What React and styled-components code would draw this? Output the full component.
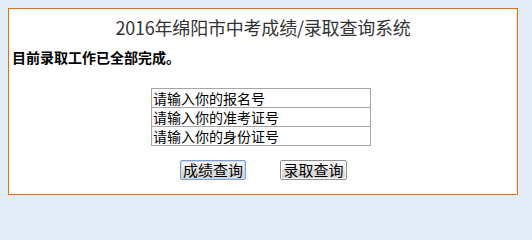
import React from "react";
import styled, { createGlobalStyle } from "styled-components";

const Global = createGlobalStyle`
  html, body { background: #e3edf7; }
  body {
    margin: 8px;
    font-family: "Noto Sans CJK SC", "Noto Sans", sans-serif;
  }
`;

const Panel = styled.div`
  width: 508px;
  height: 185px;
  border: 1px solid #ff6600;
  background: #fff;
  display: flex;
  flex-direction: column;
`;

const Title = styled.h1`
  margin: 6px 0 0;
  font-size: 18px;
  line-height: 24px;
  font-weight: normal;
  color: #333;
  text-align: center;
  letter-spacing: -0.2px;
`;

const Notice = styled.p`
  margin: 8px 0 0 3px;
  font-size: 14px;
  line-height: 20px;
  font-weight: bold;
  color: #000;
`;

const Fields = styled.div`
  margin: 21px 0 0 142px;
  display: flex;
  flex-direction: column;
  width: 220px;
`;

const Field = styled.input`
  box-sizing: border-box;
  width: 220px;
  height: 20px;
  margin: 0;
  padding: 0 1px;
  border: 1px solid #a5a5a5;
  font-family: "Noto Sans CJK SC", sans-serif;
  font-size: 14px;
  line-height: 18px;
  color: #000;
  background: #fff;
  outline: none;
  & + & { margin-top: -1px; }
`;

const Actions = styled.div`
  margin-top: 14px;
  display: flex;
  justify-content: center;
  gap: 34px;
  padding-left: 1px;
`;

const Button = styled.button`
  box-sizing: border-box;
  height: 20px;
  width: ${(p) => p.$w}px;
  padding: 0;
  margin: 0;
  font-family: "Noto Sans CJK SC", sans-serif;
  font-size: 15px;
  line-height: 18px;
  color: #000;
  border: 1px solid ${(p) => (p.$primary ? "#7aa0d4" : "#8f8f8f")};
  border-radius: 2px;
  background: linear-gradient(#f6f6f6 0%, #ececec 50%, #dcdcdc 51%, #d8d8d8 100%);
  box-shadow: ${(p) => (p.$primary ? "inset 0 0 0 1px #c7daf2" : "inset 0 0 0 1px #fbfbfb")};
  cursor: pointer;
`;

export default function App() {
  return (
    <>
      <Global />
      <Panel>
        <Title>2016年绵阳市中考成绩/录取查询系统</Title>
        <Notice>目前录取工作已全部完成。</Notice>
        <Fields>
          <Field defaultValue="请输入你的报名号" />
          <Field defaultValue="请输入你的准考证号" />
          <Field defaultValue="请输入你的身份证号" />
        </Fields>
        <Actions>
          <Button $primary $w={66}>成绩查询</Button>
          <Button $w={67}>录取查询</Button>
        </Actions>
      </Panel>
    </>
  );
}
